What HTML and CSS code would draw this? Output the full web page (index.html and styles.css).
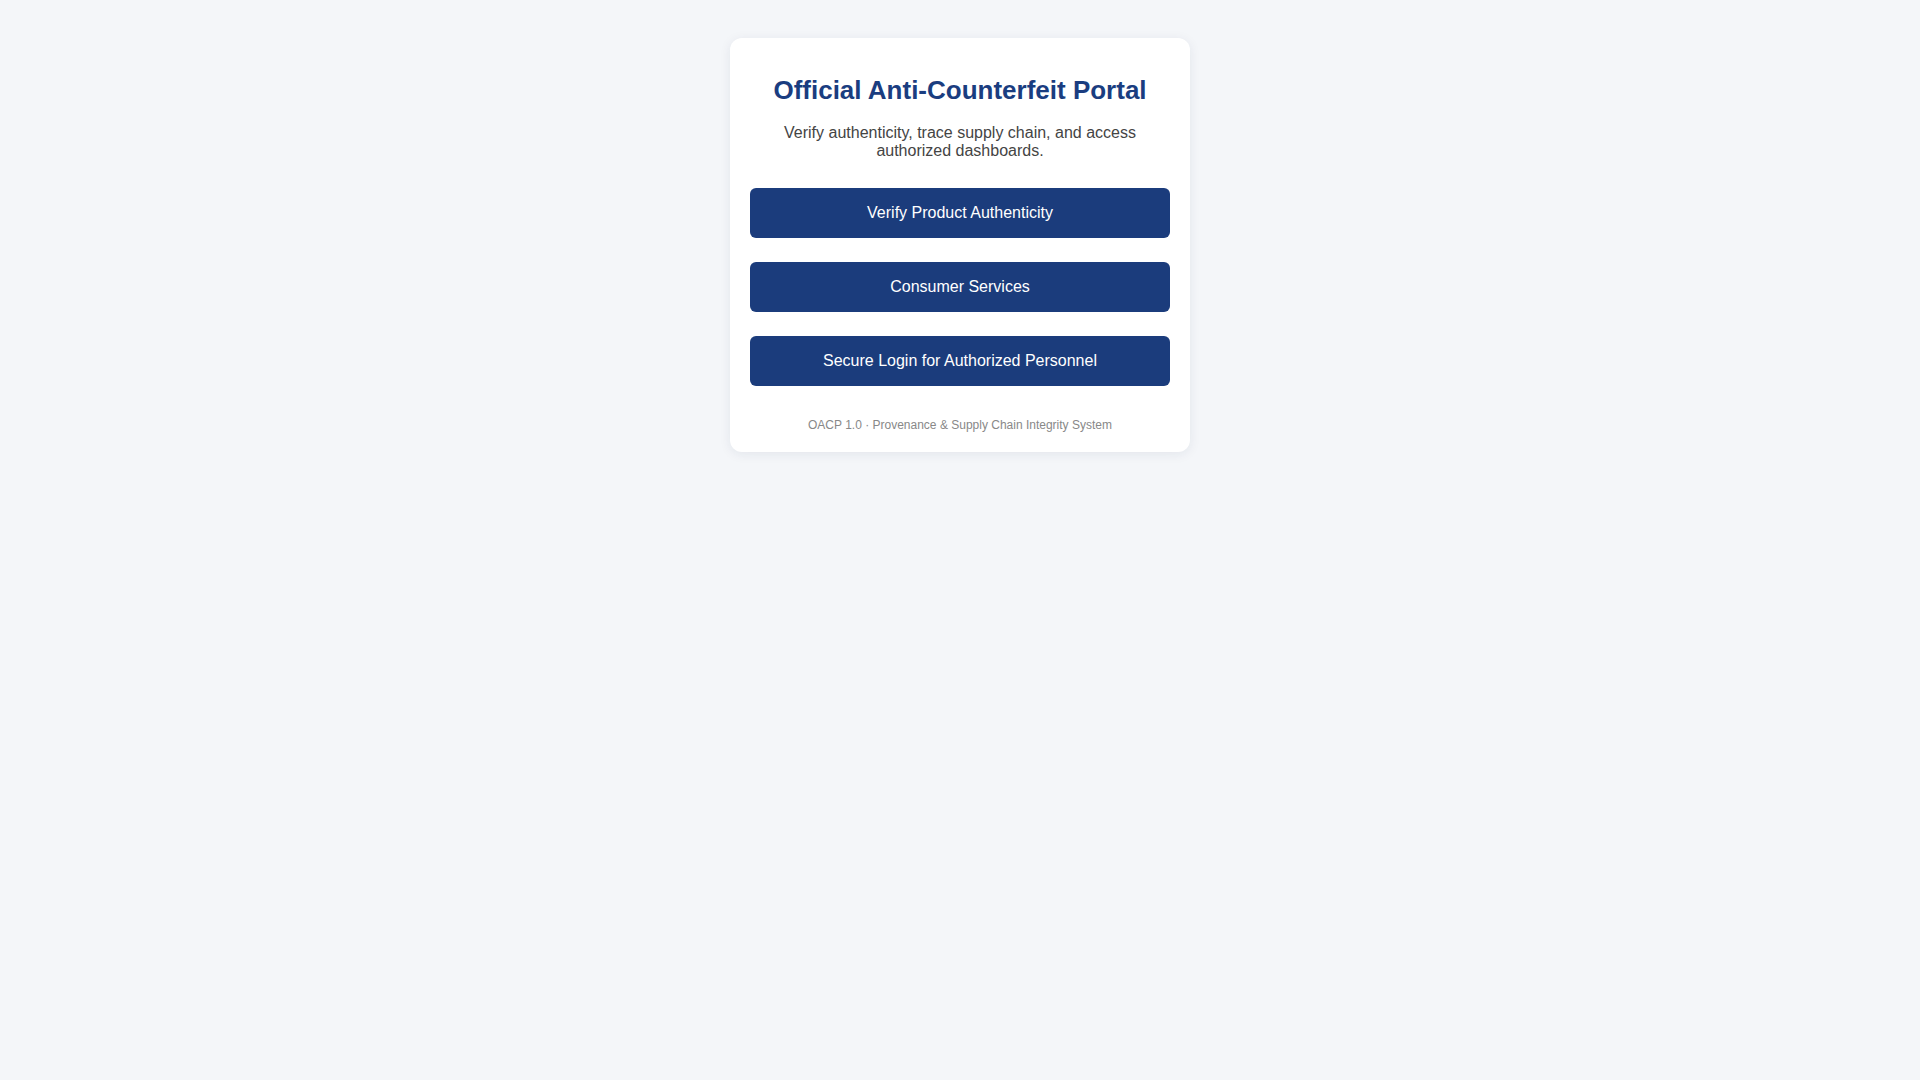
FILE: index.html
```html
<!DOCTYPE html>
<html lang="en">
<head>
<meta charset="utf-8">
<title>Official Anti-Counterfeit Portal</title>
<link rel="stylesheet" href="styles.css">
</head>
<body>
<main class="card">
  <h1 class="title">Official Anti-Counterfeit Portal</h1>
  <p class="subtitle">Verify authenticity, trace supply chain, and access authorized dashboards.</p>
  <nav class="actions">
    <a class="btn" href="#">Verify Product Authenticity</a>
    <a class="btn" href="#">Consumer Services</a>
    <a class="btn" href="#">Secure Login for Authorized Personnel</a>
  </nav>
  <footer class="foot">OACP 1.0 · Provenance &amp; Supply Chain Integrity System</footer>
</main>
</body>
</html>
```
FILE: styles.css
```css
html, body {
  background: #f4f6f9;
}
body {
  margin: 0;
  padding: 38px 0;
  font-family: "Liberation Sans", Arial, sans-serif;
}
.card {
  width: 420px;
  margin: 0 auto;
  padding: 20px;
  background: #ffffff;
  border-radius: 12px;
  box-shadow: 0 2px 12px rgba(20, 40, 80, 0.08);
  text-align: center;
}
.title {
  margin: 17px 0 19px;
  font-size: 26px;
  line-height: 30px;
  font-weight: bold;
  color: #1a3d80;
}
.subtitle {
  margin: 0 20px 27px;
  font-size: 16px;
  line-height: 18.4px;
  color: #444444;
}
.actions {
  display: flex;
  flex-direction: column;
  gap: 24px;
}
.btn {
  display: flex;
  align-items: center;
  justify-content: center;
  height: 50px;
  background: #1b3c7c;
  color: #ffffff;
  border-radius: 6px;
  font-size: 16px;
  text-decoration: none;
}
.foot {
  margin-top: 32px;
  font-size: 12px;
  line-height: 14px;
  color: #888888;
}
```
